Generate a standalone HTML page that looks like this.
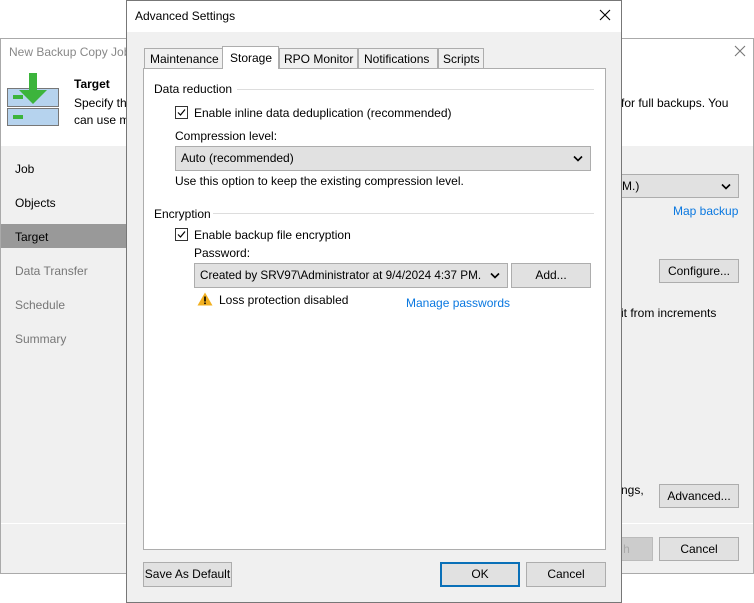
<!DOCTYPE html>
<html><head><meta charset="utf-8"><style>
*{box-sizing:border-box;margin:0;padding:0}
body{width:754px;height:603px;background:#fff;font-family:"Liberation Sans",sans-serif;font-size:12px;color:#000;position:relative;overflow:hidden}
.a{position:absolute}
.btn{position:absolute;background:#e1e1e1;border:1px solid #adadad;text-align:center;line-height:23px;font-size:12px}
.dd{position:absolute;background:#e1e1e1;border:1px solid #adadad;line-height:23px;padding-left:5px}
.chev{position:absolute;right:7px;top:8px;width:10px;height:7px}
.cb{position:absolute;width:13px;height:13px;border:1px solid #333;background:#fff}
.link{color:#0a78e0}
</style></head><body>
<svg width="0" height="0" style="position:absolute"><defs><symbol id="ch" viewBox="0 0 10 7"><path d="M1 1.5 5 5.5 9 1.5" fill="none" stroke="#000" stroke-width="1.6"/></symbol><symbol id="ck" viewBox="0 0 11 11"><path d="M2 5.5 4.5 8 9 2.5" fill="none" stroke="#000" stroke-width="1.2"/></symbol></defs></svg>
<div class="a" style="left:0;top:38px;width:754px;height:536px;border:1px solid #aaa;background:#f0f0f0"></div>
<div class="a" style="left:1px;top:39px;width:752px;height:107px;background:#fff"></div>
<div class="a" style="left:9px;top:45px;color:#888;font-size:12px">New Backup Copy Job</div>
<svg class="a" style="left:734px;top:45px" width="12" height="12"><path d="M1 1 11 11M11 1 1 11" stroke="#777" stroke-width="1.1"/></svg>
<svg class="a" style="left:7px;top:73px" width="52" height="54">
<rect x="0.5" y="15.5" width="51" height="18" fill="#b6d3ee" stroke="#777"/>
<rect x="0.5" y="35.5" width="51" height="17" fill="#b6d3ee" stroke="#777"/>
<rect x="6" y="22" width="10" height="4" fill="#3cb43c"/>
<rect x="6" y="42" width="10" height="4" fill="#3cb43c"/>
<path d="M22 0h8v17h10l-14 14-14-14h10z" fill="#3cb43c"/>
</svg>
<div class="a" style="left:74px;top:77px;font-weight:bold">Target</div>
<div class="a" style="left:74px;top:96px">Specify th</div>
<div class="a" style="left:74px;top:113px">can use m</div>
<div class="a" style="left:621px;top:96px">for full backups. You</div>
<div class="a" style="left:15px;top:162px">Job</div>
<div class="a" style="left:15px;top:196px">Objects</div>
<div class="a" style="left:1px;top:224px;width:125px;height:24px;background:#999"></div>
<div class="a" style="left:15px;top:230px">Target</div>
<div class="a" style="left:15px;top:264px;color:#777">Data Transfer</div>
<div class="a" style="left:15px;top:298px;color:#777">Schedule</div>
<div class="a" style="left:15px;top:332px;color:#777">Summary</div>
<div class="a" style="left:1px;top:523px;width:752px;height:1px;background:#fff"></div>
<div class="dd" style="left:600px;top:174px;width:139px;height:24px;padding-left:21px">M.)<svg class="chev"><use href="#ch"/></svg></div>
<div class="a link" style="left:673px;top:204px">Map backup</div>
<div class="btn" style="left:659px;top:259px;width:80px;height:24px;line-height:22px">Configure...</div>
<div class="a" style="left:621px;top:306px">it from increments</div>
<div class="a" style="left:621px;top:483px">ngs,</div>
<div class="btn" style="left:659px;top:484px;width:80px;height:24px;line-height:22px">Advanced...</div>
<div class="btn" style="left:600px;top:537px;width:53px;height:24px;line-height:22px;background:#ccc;border-color:#bbb;color:#aaa">h</div>
<div class="btn" style="left:659px;top:537px;width:80px;height:24px;line-height:22px">Cancel</div>
<div class="a" style="left:126px;top:0;width:496px;height:603px;border:1px solid #777;background:#f0f0f0"></div>
<div class="a" style="left:127px;top:1px;width:494px;height:31px;background:#fff"></div>
<div class="a" style="left:135px;top:9px">Advanced Settings</div>
<svg class="a" style="left:599px;top:9px" width="12" height="12"><path d="M1 1 11 11M11 1 1 11" stroke="#000" stroke-width="1.1"/></svg>
<div class="a" style="left:143px;top:68px;width:463px;height:482px;border:1px solid #adadad;background:#fff"></div>
<div class="a" style="left:144px;top:48px;width:79px;height:21px;border:1px solid #adadad;background:#f0f0f0;padding:3px 0 0 5px">Maintenance</div>
<div class="a" style="left:222px;top:46px;width:57px;height:23px;border:1px solid #adadad;border-bottom:none;background:#fff;padding:4px 0 0 7px">Storage</div>
<div class="a" style="left:279px;top:48px;width:79px;height:21px;border:1px solid #adadad;background:#f0f0f0;padding:3px 0 0 4px">RPO Monitor</div>
<div class="a" style="left:358px;top:48px;width:80px;height:21px;border:1px solid #adadad;background:#f0f0f0;padding:3px 0 0 5px">Notifications</div>
<div class="a" style="left:438px;top:48px;width:46px;height:21px;border:1px solid #adadad;background:#f0f0f0;padding:3px 0 0 4px">Scripts</div>
<div class="a" style="left:154px;top:82px">Data reduction</div>
<div class="a" style="left:237px;top:89px;width:357px;height:1px;background:#ddd"></div>
<div class="cb" style="left:175px;top:106px"><svg width="11" height="11" style="display:block"><use href="#ck"/></svg></div>
<div class="a" style="left:194px;top:106px">Enable inline data deduplication (recommended)</div>
<div class="a" style="left:175px;top:129px">Compression level:</div>
<div class="dd" style="left:175px;top:146px;width:416px;height:25px">Auto (recommended)<svg class="chev"><use href="#ch"/></svg></div>
<div class="a" style="left:175px;top:174px">Use this option to keep the existing compression level.</div>
<div class="a" style="left:154px;top:207px">Encryption</div>
<div class="a" style="left:213px;top:213px;width:381px;height:1px;background:#ddd"></div>
<div class="cb" style="left:175px;top:228px"><svg width="11" height="11" style="display:block"><use href="#ck"/></svg></div>
<div class="a" style="left:194px;top:228px">Enable backup file encryption</div>
<div class="a" style="left:194px;top:246px">Password:</div>
<div class="dd" style="left:194px;top:263px;width:314px;height:25px;white-space:nowrap;overflow:hidden;font-size:11.7px">Created by SRV97\Administrator at 9/4/2024 4:37 PM.<svg class="chev" style="background:#e1e1e1"><use href="#ch"/></svg></div>
<div class="btn" style="left:511px;top:263px;width:80px;height:25px">Add...</div>
<svg class="a" style="left:197px;top:292px" width="16" height="14"><path d="M8 0.5 15.5 13.5H0.5Z" fill="#f2b020"/><rect x="7.2" y="4.5" width="1.6" height="5" fill="#000"/><rect x="7.2" y="10.5" width="1.6" height="1.6" fill="#000"/></svg>
<div class="a" style="left:219px;top:293px">Loss protection disabled</div>
<div class="a link" style="left:406px;top:296px">Manage passwords</div>
<div class="btn" style="left:143px;top:562px;width:89px;height:25px">Save As Default</div>
<div class="btn" style="left:440px;top:562px;width:80px;height:25px;border:2px solid #0a70b8;line-height:21px">OK</div>
<div class="btn" style="left:526px;top:562px;width:80px;height:25px">Cancel</div>
</body></html>
